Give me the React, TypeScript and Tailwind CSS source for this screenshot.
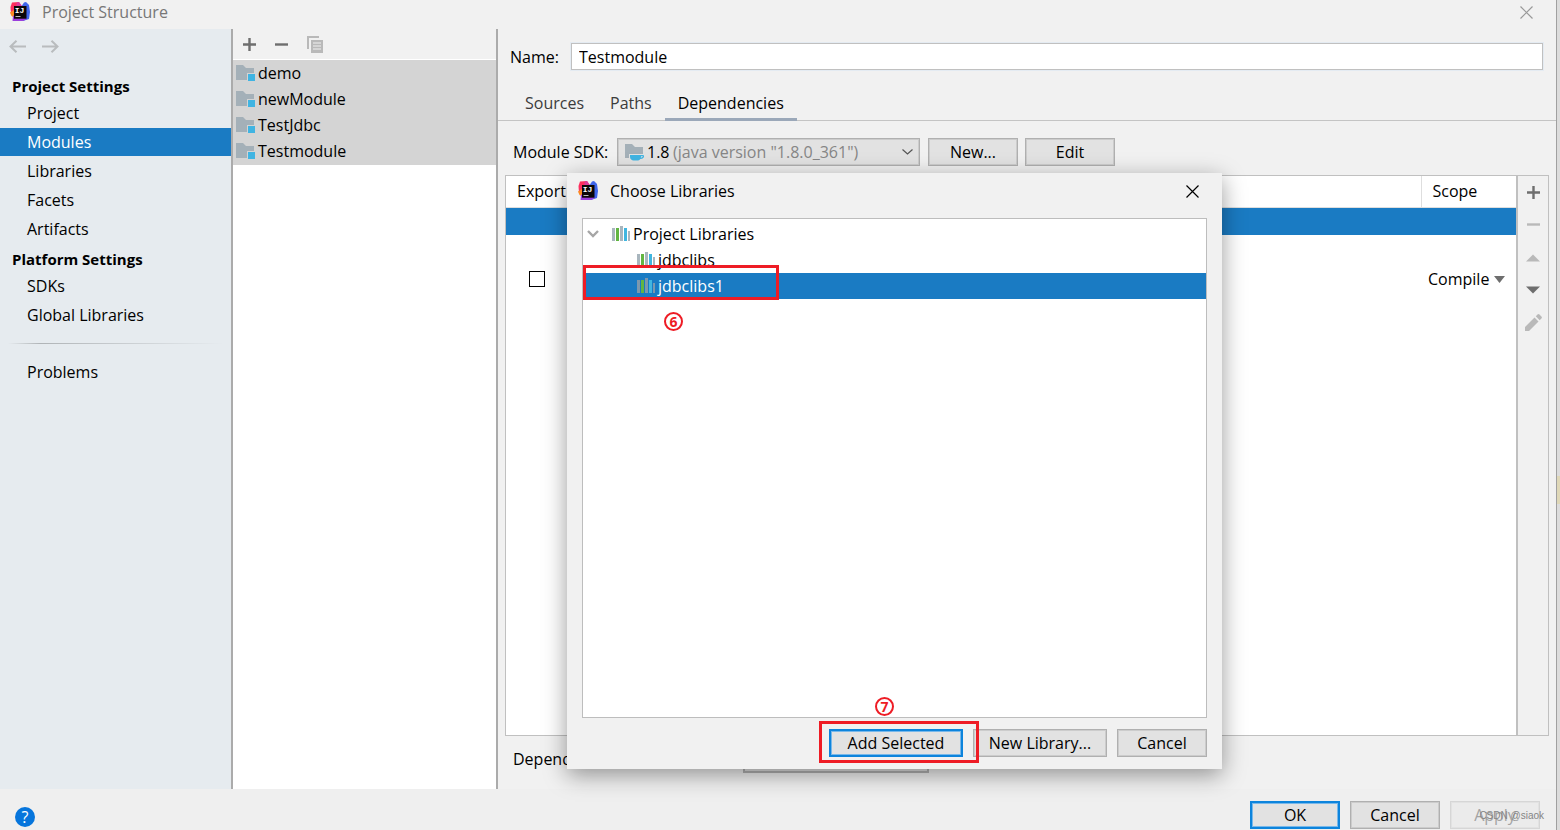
import { useState } from 'react'
import type { ReactNode } from 'react'
import clsx from 'clsx'

const projectSettings = ['Project', 'Modules', 'Libraries', 'Facets', 'Artifacts']
const platformSettings = ['SDKs', 'Global Libraries']
const modules = ['demo', 'newModule', 'TestJdbc', 'Testmodule']
const tabs = ['Sources', 'Paths', 'Dependencies']

function Logo() {
  return (
    <svg width="21" height="20" viewBox="0 0 21 20" aria-hidden="true">
      <path d="M0.500 5 2 0.500 9 0 12 5 7 14 1 12Z" fill="#fc2f5e" />
      <path d="M0 10.500 4 8 8 12 5 16 1.500 14Z" fill="#fb8b22" />
      <path d="M11 5 14 0.500 16 0 19 3 20 10 19 17 13 19 8 17Z" fill="#3f66ea" />
      <path d="M3 14 8 11 17 17 13 19 2.500 19Z" fill="#9a3fdc" />
      <path d="M7 0.300 9 0 12 4 10 6 6 5Z" fill="#dc3a9a" />
      <rect x="4" y="4" width="12.500" height="12.700" fill="#0b0708" />
      <text x="4.800" y="11" fontSize="8" fontWeight="700" fill="#fff" fontFamily="Liberation Mono, monospace">IJ</text>
      <rect x="5.500" y="14" width="5" height="1" fill="#bbb" />
    </svg>
  )
}

function CloseIcon() {
  return (
    <svg width="13" height="13" viewBox="0 0 13 13" fill="none" stroke="currentColor" strokeWidth="1.2">
      <path d="M0.5 0.5 12.5 12.5M12.5 0.5 0.5 12.5" />
    </svg>
  )
}

function ArrowIcon({ flip }: { flip?: boolean }) {
  return (
    <svg width="17" height="13" viewBox="0 0 17 13" fill="none" stroke="#b9bcbe" strokeWidth="2" className={flip ? 'rotate-180' : ''}>
      <path d="M17 6.5H1.5M7.5 0.8 1.5 6.5 7.5 12.2" />
    </svg>
  )
}

function PlusIcon() {
  return (
    <svg width="13" height="13" viewBox="0 0 13 13" fill="#6e6e6e">
      <path d="M5.3 0h2.4v5.3H13v2.4H7.7V13H5.3V7.7H0V5.3h5.3z" />
    </svg>
  )
}

function MinusIcon() {
  return (
    <svg width="13" height="13" viewBox="0 0 13 13" fill="currentColor">
      <path d="M0 5.3h13v2.4H0z" />
    </svg>
  )
}

function CopyIcon() {
  return (
    <svg width="16" height="17" viewBox="0 0 16 17" fill="#b9b9b9">
      <path d="M0 0h12v2H2v11H0z" />
      <path d="M4 4h12v13H4zM6 6.500v1h8v-1zM6 9.500v1h8v-1zM6 12.500v1h8v-1z" fillRule="evenodd" />
    </svg>
  )
}

function FolderIcon() {
  return (
    <svg width="20" height="18" viewBox="0 0 20 18">
      <path d="M0 1h7l3 3h8v5h-7v7H0z" fill="#a4b0b8" />
      <rect x="12" y="10" width="7" height="7" fill="#40b4e2" />
    </svg>
  )
}

function SdkIcon() {
  return (
    <svg width="20" height="19" viewBox="0 0 20 19">
      <path d="M0 1h7l3 3h8v7H4v4H0z" fill="#a4b0b8" />
      <path d="M5 12h11v2c0 2-2 3.500-3 3.500H8.500C7 17.500 5 16 5 14z" fill="#40b4e2" />
      <path d="M15 12.700h3c1 0 .5 2.800-3 2.800" fill="none" stroke="#40b4e2" strokeWidth="1.2" />
    </svg>
  )
}

function LibraryIcon({ dim }: { dim?: boolean }) {
  const gray = dim ? '#7d98ad' : '#a9b6be'
  return (
    <svg width="18" height="16" viewBox="0 0 18 16">
      <rect x="0" y="2" width="3" height="13" fill={gray} />
      <rect x="4" y="2" width="3" height="13" fill="#62b543" />
      <rect x="8" y="0" width="3" height="15" fill={gray} />
      <rect x="12" y="2" width="3" height="13" fill="#40b6e0" />
      <rect x="16" y="5" width="2" height="10" fill={gray} />
    </svg>
  )
}

function Triangle({ up }: { up?: boolean }) {
  return (
    <svg width="14" height="8" viewBox="0 0 14 8" fill="currentColor">
      <path d={up ? 'M0 7.500 7 0.500 14 7.500z' : 'M0 0.500h14L7 7.500z'} />
    </svg>
  )
}

function PencilIcon() {
  return (
    <svg width="17" height="17" viewBox="0 0 17 17" fill="#b9b9b9">
      <path d="M0 17v-4l9.500-9.500 4 4L4 17zM10.800 2.300 12.500 0.600q1-1 2 0l1.900 1.900q1 1 0 2l-1.700 1.700z" />
    </svg>
  )
}

function Button({ children, primary, disabled, wide }: { children: ReactNode; primary?: boolean; disabled?: boolean; wide?: boolean }) {
  return (
    <button
      disabled={disabled}
      className={clsx(
        'flex h-7 items-center justify-center whitespace-nowrap pb-px',
        wide ? 'w-[134px]' : 'w-[90px]',
        primary && 'border-2 border-[#0d84dc] bg-[#e2e2e2] shadow-[inset_0_0_0_1px_#78b8ea]',
        disabled && 'border border-[#d6d6d6] bg-[#ebebeb] text-[#a3a3a3] shadow-[inset_0_0_0_1px_#e2e2e2]',
        !primary && !disabled && 'border border-[#b0b0b0] bg-[#e2e2e2] shadow-[inset_0_0_0_1px_#cccccc]',
      )}
    >
      {children}
    </button>
  )
}

function NavList({ items, active, onSelect }: { items: string[]; active: string; onSelect: (s: string) => void }) {
  return (
    <ul className="flex flex-col gap-px">
      {items.map((item) => (
        <li key={item}>
          <button
            onClick={() => onSelect(item)}
            className={clsx('flex h-7 w-full items-center pl-[27px] text-left', active === item && 'bg-[#1a7bc3] text-white')}
          >
            {item}
          </button>
        </li>
      ))}
    </ul>
  )
}

function Sidebar() {
  const [active, setActive] = useState('Modules')
  return (
    <nav className="w-[233px] shrink-0 border-r-2 border-[#ababab] bg-[#e6ebef]">
      <div className="flex h-11 items-start gap-4 pt-[11px] pl-[9px]">
        <button aria-label="Back"><ArrowIcon /></button>
        <button aria-label="Forward"><ArrowIcon flip /></button>
      </div>
      <h2 className="flex h-[26px] items-center pl-3 text-[15px] font-bold">Project Settings</h2>
      <NavList items={projectSettings} active={active} onSelect={setActive} />
      <h2 className="mt-[2px] flex h-[27px] items-center pl-3 text-[15px] font-bold">Platform Settings</h2>
      <NavList items={platformSettings} active={active} onSelect={setActive} />
      <div className="mx-2 my-[14px] h-px bg-linear-to-r from-transparent via-[#b0b4b7] via-15% to-transparent" />
      <NavList items={['Problems']} active={active} onSelect={setActive} />
    </nav>
  )
}

function ModuleList() {
  return (
    <section className="w-[265px] shrink-0 border-r-2 border-[#ababab] bg-white">
      <div className="mb-px flex h-[30px] items-center gap-[19px] bg-[#f1f1f1] pl-[10px] text-[#6e6e6e]">
        <button aria-label="Add module"><PlusIcon /></button>
        <button aria-label="Remove module"><MinusIcon /></button>
        <button aria-label="Copy module"><CopyIcon /></button>
      </div>
      <ul className="bg-[#d4d4d4] pb-px">
        {modules.map((name) => (
          <li key={name} className="flex h-[26px] items-center gap-[2px] pl-[3px]">
            <FolderIcon />
            {name}
          </li>
        ))}
      </ul>
    </section>
  )
}

function DependencyTable() {
  return (
    <div className="mx-[7px] mt-[9px] flex flex-1 border border-[#c0c0c0]">
      <div className="flex-1 bg-white">
        <table className="w-full border-collapse">
          <thead>
            <tr className="h-[31px] border-b border-[#dedede] text-left">
              <th className="w-[62px] pl-[11px] font-normal">Export</th>
              <th aria-label="Library" />
              <th className="w-[95px] border-l border-[#dedede] pl-[11px] font-normal">Scope</th>
            </tr>
          </thead>
          <tbody>
            <tr className="h-7 bg-[#1a7bc3]">
              <td colSpan={3} />
            </tr>
            <tr className="h-7">
              <td colSpan={3} />
            </tr>
            <tr className="h-8">
              <td className="pl-[23px]">
                <input
                  type="checkbox"
                  aria-label="Export library"
                  className="block size-4 appearance-none border border-black bg-white"
                />
              </td>
              <td />
              <td>
                <div className="relative flex items-center pl-[7px]">
                  <select aria-label="Scope" className="w-20 appearance-none">
                    <option>Compile</option>
                    <option>Test</option>
                    <option>Runtime</option>
                    <option>Provided</option>
                  </select>
                  <svg width="11" height="7" viewBox="0 0 11 7" fill="#6e6e6e" className="pointer-events-none absolute right-[11px]">
                    <path d="M0 0h11L5.500 7z" />
                  </svg>
                </div>
              </td>
            </tr>
          </tbody>
        </table>
      </div>
      <div className="flex w-8 flex-col items-center border-l-2 border-[#c0c0c0] pt-[10px] text-[#b9b9b9]">
        <button aria-label="Add" className="flex h-8 items-start"><PlusIcon /></button>
        <button aria-label="Remove" className="flex h-9 items-start"><MinusIcon /></button>
        <button aria-label="Move up" className="flex h-8 items-start"><Triangle up /></button>
        <button aria-label="Move down" className="flex h-7 items-start text-[#6e6e6e]"><Triangle /></button>
        <button aria-label="Edit dependency"><PencilIcon /></button>
      </div>
    </div>
  )
}

function ModuleEditor() {
  const [name, setName] = useState('Testmodule')
  const [tab, setTab] = useState('Dependencies')
  return (
    <main className="flex min-w-0 flex-1 flex-col">
      <div className="mt-[14px] flex items-center pl-3 pr-[13px]">
        <label htmlFor="name" className="w-[61px]">Name:</label>
        <input
          id="name"
          value={name}
          onChange={(e) => setName(e.target.value)}
          className="h-[27px] flex-1 border border-[#c0c0c0] bg-white px-[7px] outline outline-[#e4ebf2]"
        />
      </div>
      <div className="mt-[18px] flex h-[33px] border-b border-[#c4c4c4] pl-[14px]">
        {tabs.map((t) => (
          <button
            key={t}
            onClick={() => setTab(t)}
            className={clsx('h-[33px] border-b-3 px-[13px]', tab === t ? 'border-[#9ba8b9]' : 'border-transparent text-[#3c3c3c]')}
          >
            {t}
          </button>
        ))}
      </div>
      <div className="mt-[17px] flex items-center pl-[15px]">
        <label htmlFor="sdk" className="w-[104px]">Module SDK:</label>
        <div className="relative flex h-7 w-[303px] items-center">
          <select id="sdk" className="h-7 w-full appearance-none border border-[#b0b0b0] bg-[#e2e2e2] pl-[29px] shadow-[inset_0_0_0_1px_#cccccc]">
            <option>1.8</option>
          </select>
          <span className="pointer-events-none absolute left-2"><SdkIcon /></span>
          <span className="pointer-events-none absolute left-[56px] text-[#868686]">(java version "1.8.0_361")</span>
          <svg width="11" height="6" viewBox="0 0 11 6" fill="none" stroke="#555" strokeWidth="1.200" className="pointer-events-none absolute right-[7px]">
            <path d="M0.500 0.500 5.500 5 10.500 0.500" />
          </svg>
        </div>
        <div className="ml-2 flex gap-[7px]">
          <Button>New...</Button>
          <Button>Edit</Button>
        </div>
      </div>
      <DependencyTable />
      <div className="mb-4 mt-[9px] flex items-center pl-[15px]">
        <label htmlFor="format" className="w-[230px] whitespace-nowrap">Dependencies storage format:</label>
        <select id="format" className="h-7 w-[186px] appearance-none border-2 border-[#b4b4b4] bg-[#e2e2e2] px-2">
          <option>IntelliJ IDEA (.iml)</option>
          <option>Eclipse (.classpath)</option>
        </select>
      </div>
    </main>
  )
}

function Step({ n, className }: { n: number; className: string }) {
  return (
    <span className={clsx('absolute flex size-[19px] items-center justify-center rounded-full border-2 border-[#ee1c25] text-sm font-bold text-[#ee1c25]', className)}>
      {n}
    </span>
  )
}

function ChooseLibraries() {
  return (
    <div
      role="dialog"
      aria-label="Choose Libraries"
      className="absolute left-[567px] top-[173px] flex h-[596px] w-[655px] flex-col bg-[#f1f1f1] px-[15px] pb-3 shadow-[0_6px_22px_rgba(0,0,0,0.4)]"
    >
      <div className="flex h-[45px] items-center pb-[9px]">
        <span className="-ml-1"><Logo /></span>
        <h1 className="ml-[11px] flex-1">Choose Libraries</h1>
        <button aria-label="Close" className="mr-2"><CloseIcon /></button>
      </div>
      <div role="tree" className="flex-1 border border-[#bdbdbd] bg-white pt-[2px]">
        <div role="treeitem" className="flex h-[26px] items-center pl-1">
          <svg width="12" height="8" viewBox="0 0 12 8" fill="none" stroke="#a6a6a6" strokeWidth="2.400">
            <path d="M1 1 6 6 11 1" />
          </svg>
          <span className="ml-[13px] mr-[3px]"><LibraryIcon /></span>
          Project Libraries
        </div>
        <div role="treeitem" className="flex h-[26px] items-center gap-[3px] pl-[54px]">
          <LibraryIcon />
          jdbclibs
        </div>
        <div role="treeitem" aria-selected="true" className="flex h-[26px] items-center gap-[3px] bg-[#1a7bc3] pl-[54px] text-white">
          <LibraryIcon dim />
          jdbclibs1
        </div>
      </div>
      <div className="mt-[11px] flex justify-end gap-[10px]">
        <Button primary wide>Add Selected</Button>
        <Button wide>New Library...</Button>
        <Button>Cancel</Button>
      </div>
      <div className="pointer-events-none absolute left-4 top-[92px] h-[35px] w-[196px] border-3 border-[#ee1c25]" />
      <Step n={6} className="left-[97px] top-[139px]" />
      <Step n={7} className="left-[308px] top-[524px]" />
      <div className="pointer-events-none absolute left-[252px] top-[548px] h-[42px] w-[160px] border-3 border-[#ee1c25]" />
    </div>
  )
}

export default function App() {
  return (
    <div className="relative flex h-screen overflow-hidden bg-[#dcdcdc] font-['Open_Sans','Noto_Sans',sans-serif] text-base leading-6 text-black">
      <div className="flex min-w-0 flex-1 flex-col bg-[#f1f1f1]">
        <header className="flex h-[29px] shrink-0 items-start pl-[10px] text-[#777]">
          <span className="mt-[2px]"><Logo /></span>
          <h1 className="ml-[11px] flex-1">Project Structure</h1>
          <button aria-label="Close window" className="mr-[23px] mt-[6px] text-[#999]"><CloseIcon /></button>
        </header>
        <div className="flex min-h-0 flex-1">
          <Sidebar />
          <ModuleList />
          <ModuleEditor />
        </div>
        <footer className="flex h-[41px] shrink-0 items-start bg-[#efefef] pl-[15px] pr-4 pt-3">
          <button aria-label="Help" className="mt-[6px] flex size-5 items-center justify-center rounded-full bg-[#0675dc] text-white">?</button>
          <div className="relative ml-auto flex gap-[10px]">
            <Button primary>OK</Button>
            <Button>Cancel</Button>
            <Button disabled>Apply</Button>
            <span className="pointer-events-none absolute -right-1 top-[3px] font-[Liberation_Sans,sans-serif] text-[10px] leading-6 text-[#858585]">CSDN @siaok</span>
          </div>
        </footer>
      </div>
      <div className="flex w-1 shrink-0 flex-col border-l border-[#a0a0a0]">
        <div className="mt-[476px] h-7 bg-[#dfd8b8]" />
      </div>
      <ChooseLibraries />
    </div>
  )
}
